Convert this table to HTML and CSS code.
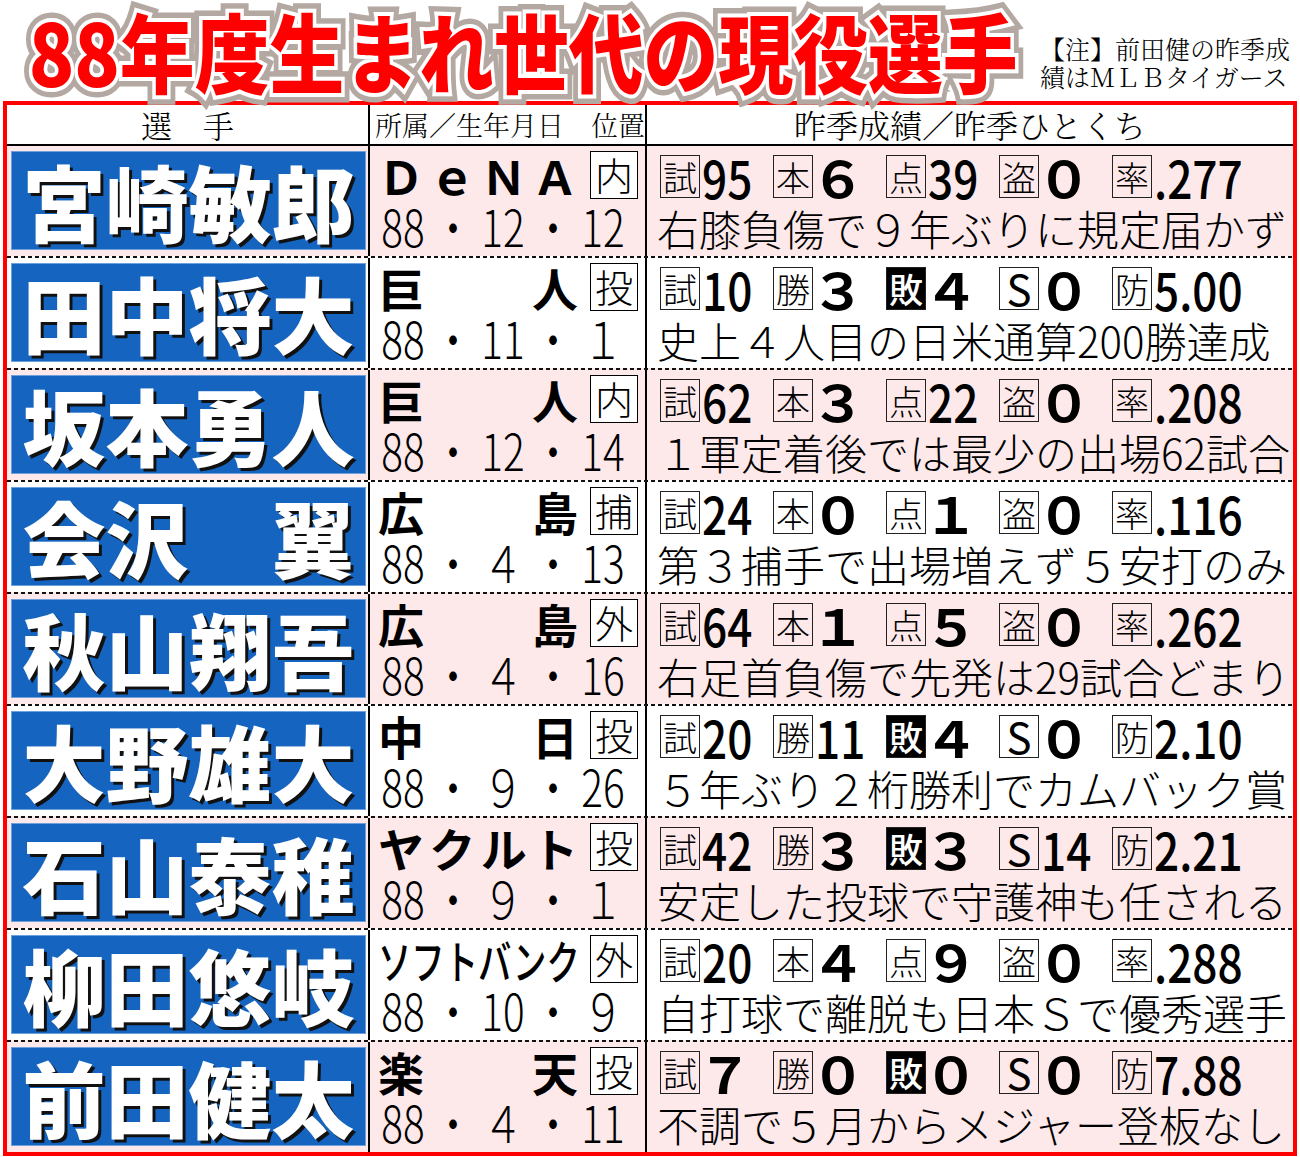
FILE: index.html
```html
<!DOCTYPE html>
<html lang="ja">
<head>
<meta charset="utf-8">
<title>88年度生まれ世代の現役選手</title>
<link rel="stylesheet" href="styles.css">
</head>
<body>
<div class="top">
  <div class="title"><h1><span class="t" data-t="88年度生まれ世代の現役選手">88年度生まれ世代の現役選手</span></h1></div>
  <div class="note">【注】前田健の昨季成<br>績はＭＬＢタイガース</div>
</div>
<div class="tbl">
  <div class="hdr">
    <div class="c1 h">選　手</div>
    <div class="c2 h h2">所属／生年月日　位置</div>
    <div class="c3 h h3">昨季成績／昨季ひとくち</div>
  </div>

  <div class="row first pink">
    <div class="c1"><div class="name">宮崎敏郎</div></div>
    <div class="c2">
      <div class="teamline"><div class="tn"><span>Ｄ</span><span>ｅ</span><span>Ｎ</span><span>Ａ</span></div><div class="pos">内</div></div>
      <div class="date"><span>88</span><span>・</span><span>12</span><span>・</span><span>12</span></div>
    </div>
    <div class="c3">
      <div class="stats">
        <div class="st"><span class="lb">試</span><span class="n2">95</span></div>
        <div class="st"><span class="lb">本</span><span class="n1">６</span></div>
        <div class="st"><span class="lb">点</span><span class="n2">39</span></div>
        <div class="st"><span class="lb">盗</span><span class="n1">０</span></div>
        <div class="st"><span class="lb">率</span><span class="n2">.277</span></div>
      </div>
      <div class="cmt">右膝負傷で９年ぶりに規定届かず</div>
    </div>
  </div>

  <div class="row">
    <div class="c1"><div class="name">田中将大</div></div>
    <div class="c2">
      <div class="teamline"><div class="tn"><span>巨</span><span>人</span></div><div class="pos">投</div></div>
      <div class="date"><span>88</span><span>・</span><span>11</span><span>・</span><span>１</span></div>
    </div>
    <div class="c3">
      <div class="stats">
        <div class="st"><span class="lb">試</span><span class="n2">10</span></div>
        <div class="st"><span class="lb">勝</span><span class="n1">３</span></div>
        <div class="st"><span class="lb inv">敗</span><span class="n1">４</span></div>
        <div class="st"><span class="lb s">S</span><span class="n1">０</span></div>
        <div class="st"><span class="lb">防</span><span class="n2">5.00</span></div>
      </div>
      <div class="cmt">史上４人目の日米通算200勝達成</div>
    </div>
  </div>

  <div class="row pink">
    <div class="c1"><div class="name">坂本勇人</div></div>
    <div class="c2">
      <div class="teamline"><div class="tn"><span>巨</span><span>人</span></div><div class="pos">内</div></div>
      <div class="date"><span>88</span><span>・</span><span>12</span><span>・</span><span>14</span></div>
    </div>
    <div class="c3">
      <div class="stats">
        <div class="st"><span class="lb">試</span><span class="n2">62</span></div>
        <div class="st"><span class="lb">本</span><span class="n1">３</span></div>
        <div class="st"><span class="lb">点</span><span class="n2">22</span></div>
        <div class="st"><span class="lb">盗</span><span class="n1">０</span></div>
        <div class="st"><span class="lb">率</span><span class="n2">.208</span></div>
      </div>
      <div class="cmt">１軍定着後では最少の出場62試合</div>
    </div>
  </div>

  <div class="row">
    <div class="c1"><div class="name">会沢　翼</div></div>
    <div class="c2">
      <div class="teamline"><div class="tn"><span>広</span><span>島</span></div><div class="pos">捕</div></div>
      <div class="date"><span>88</span><span>・</span><span>４</span><span>・</span><span>13</span></div>
    </div>
    <div class="c3">
      <div class="stats">
        <div class="st"><span class="lb">試</span><span class="n2">24</span></div>
        <div class="st"><span class="lb">本</span><span class="n1">０</span></div>
        <div class="st"><span class="lb">点</span><span class="n1">１</span></div>
        <div class="st"><span class="lb">盗</span><span class="n1">０</span></div>
        <div class="st"><span class="lb">率</span><span class="n2">.116</span></div>
      </div>
      <div class="cmt">第３捕手で出場増えず５安打のみ</div>
    </div>
  </div>

  <div class="row pink">
    <div class="c1"><div class="name">秋山翔吾</div></div>
    <div class="c2">
      <div class="teamline"><div class="tn"><span>広</span><span>島</span></div><div class="pos">外</div></div>
      <div class="date"><span>88</span><span>・</span><span>４</span><span>・</span><span>16</span></div>
    </div>
    <div class="c3">
      <div class="stats">
        <div class="st"><span class="lb">試</span><span class="n2">64</span></div>
        <div class="st"><span class="lb">本</span><span class="n1">１</span></div>
        <div class="st"><span class="lb">点</span><span class="n1">５</span></div>
        <div class="st"><span class="lb">盗</span><span class="n1">０</span></div>
        <div class="st"><span class="lb">率</span><span class="n2">.262</span></div>
      </div>
      <div class="cmt">右足首負傷で先発は29試合どまり</div>
    </div>
  </div>

  <div class="row">
    <div class="c1"><div class="name">大野雄大</div></div>
    <div class="c2">
      <div class="teamline"><div class="tn"><span>中</span><span>日</span></div><div class="pos">投</div></div>
      <div class="date"><span>88</span><span>・</span><span>９</span><span>・</span><span>26</span></div>
    </div>
    <div class="c3">
      <div class="stats">
        <div class="st"><span class="lb">試</span><span class="n2">20</span></div>
        <div class="st"><span class="lb">勝</span><span class="n2">11</span></div>
        <div class="st"><span class="lb inv">敗</span><span class="n1">４</span></div>
        <div class="st"><span class="lb s">S</span><span class="n1">０</span></div>
        <div class="st"><span class="lb">防</span><span class="n2">2.10</span></div>
      </div>
      <div class="cmt">５年ぶり２桁勝利でカムバック賞</div>
    </div>
  </div>

  <div class="row pink">
    <div class="c1"><div class="name">石山泰稚</div></div>
    <div class="c2">
      <div class="teamline"><div class="tn"><span>ヤ</span><span>ク</span><span>ル</span><span>ト</span></div><div class="pos">投</div></div>
      <div class="date"><span>88</span><span>・</span><span>９</span><span>・</span><span>１</span></div>
    </div>
    <div class="c3">
      <div class="stats">
        <div class="st"><span class="lb">試</span><span class="n2">42</span></div>
        <div class="st"><span class="lb">勝</span><span class="n1">３</span></div>
        <div class="st"><span class="lb inv">敗</span><span class="n1">３</span></div>
        <div class="st"><span class="lb s">S</span><span class="n2">14</span></div>
        <div class="st"><span class="lb">防</span><span class="n2">2.21</span></div>
      </div>
      <div class="cmt">安定した投球で守護神も任される</div>
    </div>
  </div>

  <div class="row">
    <div class="c1"><div class="name">柳田悠岐</div></div>
    <div class="c2">
      <div class="teamline"><div class="tn"><span class="narrow">ソフトバンク</span></div><div class="pos">外</div></div>
      <div class="date"><span>88</span><span>・</span><span>10</span><span>・</span><span>９</span></div>
    </div>
    <div class="c3">
      <div class="stats">
        <div class="st"><span class="lb">試</span><span class="n2">20</span></div>
        <div class="st"><span class="lb">本</span><span class="n1">４</span></div>
        <div class="st"><span class="lb">点</span><span class="n1">９</span></div>
        <div class="st"><span class="lb">盗</span><span class="n1">０</span></div>
        <div class="st"><span class="lb">率</span><span class="n2">.288</span></div>
      </div>
      <div class="cmt">自打球で離脱も日本Ｓで優秀選手</div>
    </div>
  </div>

  <div class="row pink">
    <div class="c1"><div class="name">前田健太</div></div>
    <div class="c2">
      <div class="teamline"><div class="tn"><span>楽</span><span>天</span></div><div class="pos">投</div></div>
      <div class="date"><span>88</span><span>・</span><span>４</span><span>・</span><span>11</span></div>
    </div>
    <div class="c3">
      <div class="stats">
        <div class="st"><span class="lb">試</span><span class="n1">７</span></div>
        <div class="st"><span class="lb">勝</span><span class="n1">０</span></div>
        <div class="st"><span class="lb inv">敗</span><span class="n1">０</span></div>
        <div class="st"><span class="lb s">S</span><span class="n1">０</span></div>
        <div class="st"><span class="lb">防</span><span class="n2">7.88</span></div>
      </div>
      <div class="cmt">不調で５月からメジャー登板なし</div>
    </div>
  </div>
</div>
</body>
</html>
```
FILE: styles.css
```css
* { box-sizing: border-box; }
body {
  margin: 0;
  width: 1300px;
  background: #fff;
  color: #000;
  font-family: "Noto Sans CJK JP", "Noto Sans", sans-serif;
}

/* ---------- title ---------- */
.top {
  display: flex;
  height: 101px;
}
.title {
  flex: none;
  padding: 7px 0 0 33px;
  margin-right: -150px;
  transform: scaleX(0.87);
  transform-origin: 0 0;
}
.title h1 {
  margin: 0;
  font-size: 86px;
  line-height: 86px;
  font-weight: 900;
  white-space: nowrap;
}
.t {
  position: relative;
  display: inline-block;
  color: #b4a8a2;
  -webkit-text-stroke: 19px #b4a8a2;
  text-shadow: 3px 3px 0 #8f8580;
}
.t::before,
.t::after {
  content: attr(data-t);
  position: absolute;
  left: 0;
  top: 0;
  text-shadow: none;
}
.t::before {
  color: #fff;
  -webkit-text-stroke: 8px #fff;
}
.t::after {
  color: #ff0000;
  -webkit-text-stroke: 0;
}
.note {
  margin-left: auto;
  margin-right: 10px;
  padding-top: 34px;
  font-family: "Noto Serif CJK JP", "Noto Sans CJK JP", serif;
  font-size: 25px;
  line-height: 28px;
  font-weight: 300;
  white-space: nowrap;
}

/* ---------- table ---------- */
.tbl {
  margin-left: 3px;
  width: 1294px;
  border: 4px solid #ff0000;
}
.hdr {
  display: flex;
  height: 39px;
}
.c1 {
  width: 363px;
  flex: none;
  border-right: 2px solid #000;
}
.c2 {
  width: 277px;
  flex: none;
  border-right: 2px solid #000;
}
.c3 {
  flex: 1;
}
.h {
  font-family: "Noto Serif CJK JP", "Noto Sans CJK JP", serif;
  font-weight: 300;
  font-size: 31px;
  line-height: 39px;
  text-align: center;
  white-space: nowrap;
}
.h2 {
  font-size: 27px;
  text-align: left;
  padding-left: 5px;
}
.h3 {
  font-size: 32px;
}

.row {
  display: flex;
  height: 112px;
  padding-top: 2px;
  background-color: #fff;
  background-image: repeating-linear-gradient(90deg, #111 0 4px, transparent 4px 7px);
  background-size: 100% 2px;
  background-repeat: no-repeat;
}
.row.pink {
  background-color: #fde8ea;
}
.row.first {
  background-image: linear-gradient(#000, #000);
}

/* column 1: name */
.row .c1 {
  padding: 5px 2px 6px 4px;
}
.name {
  height: 100%;
  background: #1565c0;
  border: 1px solid #6d9fdc;
  display: flex;
  align-items: center;
  justify-content: center;
  color: #fff;
  font-size: 83px;
  font-weight: 900;
  line-height: 1;
  white-space: nowrap;
  text-shadow: 3px 3px 0 #111;
}

/* column 2: team, date */
.row .c2 {
  padding: 5px 0 0 8px;
}
.teamline {
  display: flex;
  align-items: center;
  height: 48px;
}
.tn {
  width: 200px;
  display: flex;
  justify-content: space-between;
  font-size: 46px;
  font-weight: 700;
  line-height: 48px;
  white-space: nowrap;
}
.tn .narrow {
  display: inline-block;
  width: 276px;
  margin-right: -76px;
  font-weight: 500;
  transform: scaleX(0.725);
  transform-origin: 0 50%;
}
.pos {
  margin-left: 12px;
  width: 48px;
  height: 48px;
  border: 1.5px solid #000;
  background: #fff;
  font-size: 38px;
  line-height: 44px;
  text-align: center;
  font-weight: 300;
}
.date {
  display: grid;
  grid-template-columns: repeat(5, 50px);
  height: 52px;
  margin-top: 1px;
  font-size: 45px;
  line-height: 52px;
  font-weight: 300;
  white-space: nowrap;
}
.date span {
  text-align: center;
  transform: scale(0.9, 1.12);
}

/* column 3: stats, comment */
.row .c3 {
  padding: 9px 0 0 13px;
}
.stats {
  display: grid;
  grid-template-columns: repeat(5, 113px);
  height: 43px;
}
.st {
  display: flex;
  align-items: center;
  white-space: nowrap;
}
.lb {
  flex: none;
  width: 40px;
  height: 43px;
  border: 1px solid #222;
  font-size: 34px;
  line-height: 41px;
  text-align: center;
  font-weight: 300;
}
.lb.s {
  font-size: 42px;
  font-weight: 400;
  line-height: 40px;
}
.lb.inv {
  background: #000;
  color: #fff;
  font-weight: 500;
}
.n2 {
  display: inline-block;
  margin-left: 2px;
  font-size: 52px;
  line-height: 43px;
  font-weight: 500;
  transform: scaleX(0.85);
  transform-origin: 0 50%;
}
.n1 {
  display: inline-block;
  font-size: 50px;
  line-height: 43px;
  font-weight: 700;
  transform: scaleX(1.1);
}
.cmt {
  margin-top: 6px;
  margin-left: -3px;
  font-size: 42px;
  line-height: 48px;
  font-weight: 300;
  white-space: nowrap;
}
```
